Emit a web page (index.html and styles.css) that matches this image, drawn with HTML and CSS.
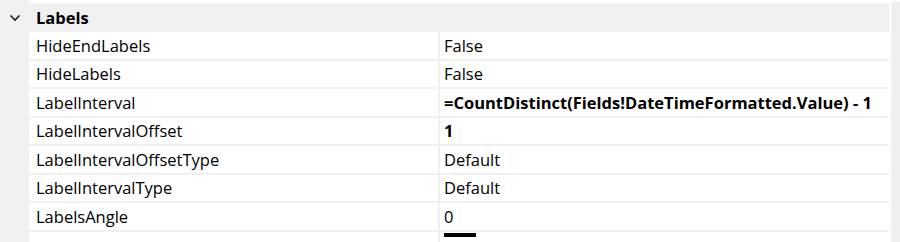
FILE: index.html
```html
<!DOCTYPE html>
<html>
<head>
  <meta charset="UTF-8">
  <title>Properties</title>
  <link rel="stylesheet" href="styles.css">
</head>
<body>
  <div class="grid">
    <div class="category">
      <span class="toggle">
        <svg width="12" height="8" viewBox="0 0 12 8"><path d="M1.5 1.5 L6 6 L10.5 1.5" fill="none" stroke="#1e1e1e" stroke-width="1.6"/></svg>
      </span>
      <span class="cat-name">Labels</span>
    </div>
    <div class="row"><div class="name">HideEndLabels</div><div class="value">False</div></div>
    <div class="row"><div class="name">HideLabels</div><div class="value">False</div></div>
    <div class="row"><div class="name">LabelInterval</div><div class="value bold">=CountDistinct(Fields!DateTimeFormatted.Value) - 1</div></div>
    <div class="row"><div class="name">LabelIntervalOffset</div><div class="value bold">1</div></div>
    <div class="row"><div class="name">LabelIntervalOffsetType</div><div class="value">Default</div></div>
    <div class="row"><div class="name">LabelIntervalType</div><div class="value">Default</div></div>
    <div class="row"><div class="name">LabelsAngle</div><div class="value">0</div></div>
    <div class="row partial"><div class="name"></div><div class="value"><span class="swatch"></span></div></div>
  </div>
  <div class="scrollbar"></div>
</body>
</html>
```

FILE: styles.css
```css
body {
  margin: 0;
  font-family: "Open Sans", "Noto Sans", sans-serif;
  font-size: 16.5px;
  color: #000;
  background: #fff;
  display: flex;
  height: 242px;
  overflow: hidden;
}
.grid {
  width: 889px;
  padding-top: 3px;
  background: linear-gradient(to right, #f0f0f0 29px, #fff 29px);
}
.category {
  height: 29px;
  background: #f0f0f0;
  display: flex;
  align-items: center;
}
.toggle {
  width: 29px;
  display: flex;
  justify-content: center;
  padding-top: 1px;
}
.cat-name {
  font-weight: bold;
  padding-left: 7px;
}
.row {
  display: flex;
  margin-left: 29px;
  height: 26.5px;
  border-bottom: 2px solid #f0f0f0;
  align-items: center;
}
.name {
  width: 402px;
  padding-left: 7px;
  height: 100%;
  display: flex;
  align-items: center;
  border-right: 2px solid #f0f0f0;
}
.value {
  padding-left: 4px;
  height: 100%;
  display: flex;
  align-items: center;
}
.bold {
  font-weight: bold;
}
.partial {
  height: 10px;
  border-bottom: none;
}
.partial .value {
  align-items: flex-start;
}
.swatch {
  display: block;
  width: 32px;
  height: 4px;
  margin-top: 1px;
  background: #000;
}
.scrollbar {
  margin-left: 2px;
  margin-top: 2px;
  width: 9px;
  background: #efefef;
}
```
